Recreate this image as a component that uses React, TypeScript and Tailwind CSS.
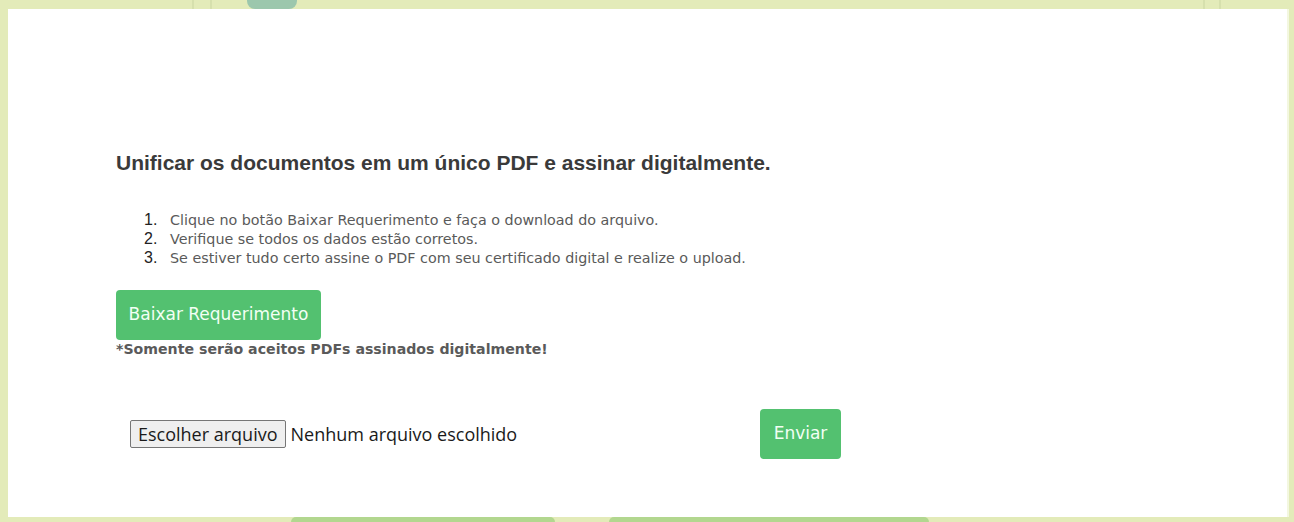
import React from "react";

export default function App() {
  const items = [
    "Clique no botão Baixar Requerimento e faça o download do arquivo.",
    "Verifique se todos os dados estão corretos.",
    "Se estiver tudo certo assine o PDF com seu certificado digital e realize o upload.",
  ];
  return (
    <div className="w-full h-[522px] overflow-hidden bg-[#e3ebb9] flex flex-col">
      {/* top strip: background fragments peeking out above the panel */}
      <div className="h-[9px] flex items-stretch shrink-0">
        <div className="w-[192px]" />
        <div className="w-[2px] bg-[#d6e0ad]" />
        <div className="w-[16px]" />
        <div className="w-[2px] bg-[#d6e0ad]" />
        <div className="w-[35px]" />
        <div className="w-[50px] rounded-b-[8px] bg-[#9cc7ad]" />
        <div className="w-[906px]" />
        <div className="w-[2px] bg-[#d6e0ad]" />
        <div className="w-[14px]" />
        <div className="w-[2px] bg-[#d6e0ad]" />
      </div>

      <div
        className="ml-[8px] w-[1281px] h-[508px] shrink-0 bg-white border-r-[2px] border-[#f3f7e0] pt-[141px] pl-[108px]"
        style={{ fontFamily: "'DejaVu Sans', Verdana, sans-serif" }}
      >
        <h1
          className="text-[21px] leading-[26px] font-bold text-[#3a3a3a]"
          style={{ fontFamily: "'Liberation Sans', Arial, sans-serif" }}
        >
          Unificar os documentos em um único PDF e assinar digitalmente.
        </h1>

        <ol className="mt-[32px] pl-[28px] flex flex-col">
          {items.map((t, i) => (
            <li key={i} className="flex items-baseline h-[19px]">
              <span
                className="w-[26px] text-[16px] text-[#222]"
                style={{ fontFamily: "'Liberation Sans', Arial, sans-serif" }}
              >
                {i + 1}.
              </span>
              <span className="text-[14.3px] text-[#5a5a5a]">{t}</span>
            </li>
          ))}
        </ol>

        <button className="mt-[25px] h-[50px] w-[205px] rounded-[4px] bg-[#53c170] text-[17px] text-[#f2fff4]">
          Baixar Requerimento
        </button>
        <p className="text-[14.15px] font-bold leading-[18px] text-[#5a5a5a]">
          *Somente serão aceitos PDFs assinados digitalmente!
        </p>

        <div className="mt-[51px] flex items-center">
          <div
            className="ml-[14px] flex items-center w-[630px] text-[18px] text-[#1a1a1a]"
            style={{ fontFamily: "'Open Sans', 'Segoe UI', sans-serif" }}
          >
            <span className="h-[28px] px-[7px] flex items-center border border-[#767676] rounded-[2px] bg-[#efefef] leading-none">
              Escolher arquivo
            </span>
            <span className="ml-[5px]">Nenhum arquivo escolhido</span>
          </div>
          <button className="h-[50px] w-[81px] rounded-[4px] bg-[#53c170] text-[17px] text-[#f2fff4]">
            Enviar
          </button>
        </div>
      </div>

      {/* bottom strip: background fragments peeking out below the panel */}
      <div className="h-[5px] flex items-stretch shrink-0">
        <div className="w-[291px]" />
        <div className="w-[264px] rounded-t-[5px] bg-[#b2d78f]" />
        <div className="w-[54px]" />
        <div className="w-[320px] rounded-t-[5px] bg-[#b2d78f]" />
      </div>
    </div>
  );
}
